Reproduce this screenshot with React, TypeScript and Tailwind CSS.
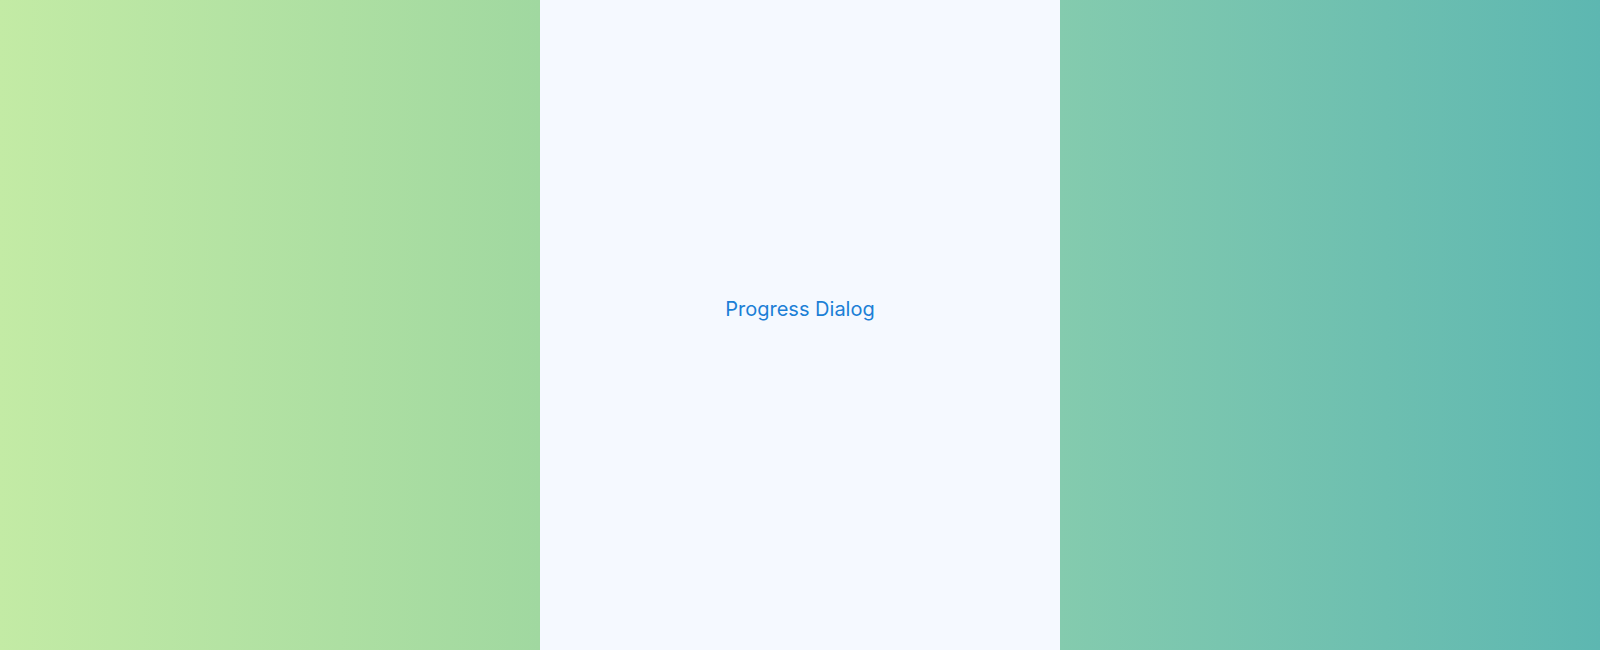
export default function App() {
  return (
    <div className="flex h-[650px] w-[1600px] overflow-hidden">
      <div className="h-full flex-1 bg-gradient-to-r from-[#c3eba5] to-[#a0d8a0]" />
      <div className="flex h-full w-[520px] items-center justify-center bg-[#f5f9ff] pb-[32px]">
        <button
          type="button"
          className="text-[20px] leading-[28px] text-[#1c7fd6]"
          style={{ fontFamily: 'Inter, "Noto Sans", sans-serif' }}
        >
          Progress Dialog
        </button>
      </div>
      <div className="h-full flex-1 bg-gradient-to-r from-[#84cbae] to-[#5db7b1]" />
    </div>
  );
}
